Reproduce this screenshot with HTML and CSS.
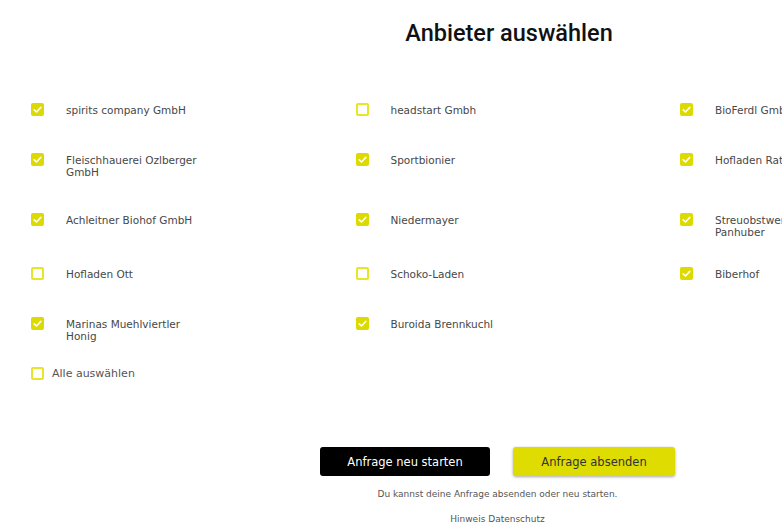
FILE: index.html
```html
<!DOCTYPE html>
<html lang="de">
<head>
    <meta charset="UTF-8">
    <meta name="viewport" content="width=device-width, initial-scale=1.0">
    <title>Anbieter auswählen</title>
    <link rel="stylesheet" href="styles.css">
</head>
<body>
    <div class="page">
        <h1 class="title">Anbieter auswählen</h1>

        <div class="providers">
            <label class="provider"><span class="box checked"><svg viewBox="0 0 13 13"><path d="M3.2 6.8l2.3 2.2 4.3-4.6"/></svg></span><span class="name">spirits company GmbH</span></label>
            <label class="provider"><span class="box checked"><svg viewBox="0 0 13 13"><path d="M3.2 6.8l2.3 2.2 4.3-4.6"/></svg></span><span class="name">Fleischhauerei Ozlberger GmbH</span></label>
            <label class="provider"><span class="box checked"><svg viewBox="0 0 13 13"><path d="M3.2 6.8l2.3 2.2 4.3-4.6"/></svg></span><span class="name">Achleitner Biohof GmbH</span></label>
            <label class="provider"><span class="box"></span><span class="name">Hofladen Ott</span></label>
            <label class="provider"><span class="box checked"><svg viewBox="0 0 13 13"><path d="M3.2 6.8l2.3 2.2 4.3-4.6"/></svg></span><span class="name">Marinas Muehlviertler Honig</span></label>

            <label class="provider"><span class="box"></span><span class="name">headstart Gmbh</span></label>
            <label class="provider"><span class="box checked"><svg viewBox="0 0 13 13"><path d="M3.2 6.8l2.3 2.2 4.3-4.6"/></svg></span><span class="name">Sportbionier</span></label>
            <label class="provider"><span class="box checked"><svg viewBox="0 0 13 13"><path d="M3.2 6.8l2.3 2.2 4.3-4.6"/></svg></span><span class="name">Niedermayer</span></label>
            <label class="provider"><span class="box"></span><span class="name">Schoko-Laden</span></label>
            <label class="provider"><span class="box checked"><svg viewBox="0 0 13 13"><path d="M3.2 6.8l2.3 2.2 4.3-4.6"/></svg></span><span class="name">Buroida Brennkuchl</span></label>

            <label class="provider"><span class="box checked"><svg viewBox="0 0 13 13"><path d="M3.2 6.8l2.3 2.2 4.3-4.6"/></svg></span><span class="name">BioFerdl GmbH</span></label>
            <label class="provider"><span class="box checked"><svg viewBox="0 0 13 13"><path d="M3.2 6.8l2.3 2.2 4.3-4.6"/></svg></span><span class="name">Hofladen Rath</span></label>
            <label class="provider"><span class="box checked"><svg viewBox="0 0 13 13"><path d="M3.2 6.8l2.3 2.2 4.3-4.6"/></svg></span><span class="name">Streuobstwerk<br>Panhuber</span></label>
            <label class="provider"><span class="box checked"><svg viewBox="0 0 13 13"><path d="M3.2 6.8l2.3 2.2 4.3-4.6"/></svg></span><span class="name">Biberhof</span></label>
        </div>

        <label class="select-all"><span class="box"></span><span>Alle auswählen</span></label>

        <div class="actions">
            <button class="btn btn-dark" type="button">Anfrage neu starten</button>
            <button class="btn btn-yellow" type="button">Anfrage absenden</button>
        </div>
        <p class="hint">Du kannst deine Anfrage absenden oder neu starten.</p>
        <a class="privacy" href="#">Hinweis Datenschutz</a>
    </div>
</body>
</html>
```

FILE: styles.css
```css
html, body {
    margin: 0;
    overflow: hidden;
    background: #fff;
}
.page {
    width: 1018px;
    font-family: "DejaVu Sans", "Open Sans", sans-serif;
    color: #474747;
}
.title {
    margin: 0;
    padding-top: 19px;
    height: 103px;
    box-sizing: border-box;
    text-align: center;
    font-family: Roboto, "Liberation Sans", sans-serif;
    font-weight: 500;
    font-size: 23.5px;
    line-height: 28px;
    color: #111;
}
.providers {
    display: grid;
    grid-auto-flow: column;
    grid-template-columns: repeat(3, 324.5px);
    grid-template-rows: 50px 60px 54px 50px 50px;
    padding-left: 31px;
}
.provider {
    display: flex;
    align-items: flex-start;
    gap: 22px;
}
.name {
    max-width: 140px;
    font-size: 10.5px;
    line-height: 12px;
    padding-top: 1px;
}
.box {
    flex: none;
    width: 13px;
    height: 13px;
    box-sizing: border-box;
    border: 2px solid #e6e52a;
    border-radius: 2px;
    background: #fff;
}
.box.checked {
    border: none;
    background: #dcda00;
}
.box svg {
    display: block;
    width: 13px;
    height: 13px;
    fill: none;
    stroke: #fff;
    stroke-width: 1.6;
    stroke-linecap: round;
    stroke-linejoin: round;
}
.select-all {
    display: flex;
    align-items: center;
    gap: 8px;
    padding-left: 31px;
    font-size: 11px;
    line-height: 13px;
    color: #555;
}
.actions {
    display: flex;
    justify-content: center;
    gap: 23px;
    margin-top: 67px;
    padding-right: 23px;
}
.btn {
    height: 29px;
    border: none;
    border-radius: 3px;
    font-family: "DejaVu Sans", "Open Sans", sans-serif;
    font-size: 11.5px;
    padding: 0;
}
.btn-dark {
    width: 170px;
    background: #000;
    color: #fff;
}
.btn-yellow {
    width: 162px;
    background: #dedc00;
    color: #333;
    box-shadow: 0 1px 3px rgba(0, 0, 0, 0.35);
}
.hint {
    margin: 12px 0 0;
    padding-right: 23px;
    text-align: center;
    font-size: 9px;
    line-height: 12px;
    color: #555;
}
.privacy {
    display: block;
    margin-top: 14px;
    padding-right: 23px;
    text-align: center;
    font-size: 9px;
    color: #555;
    text-decoration: none;
}
```
